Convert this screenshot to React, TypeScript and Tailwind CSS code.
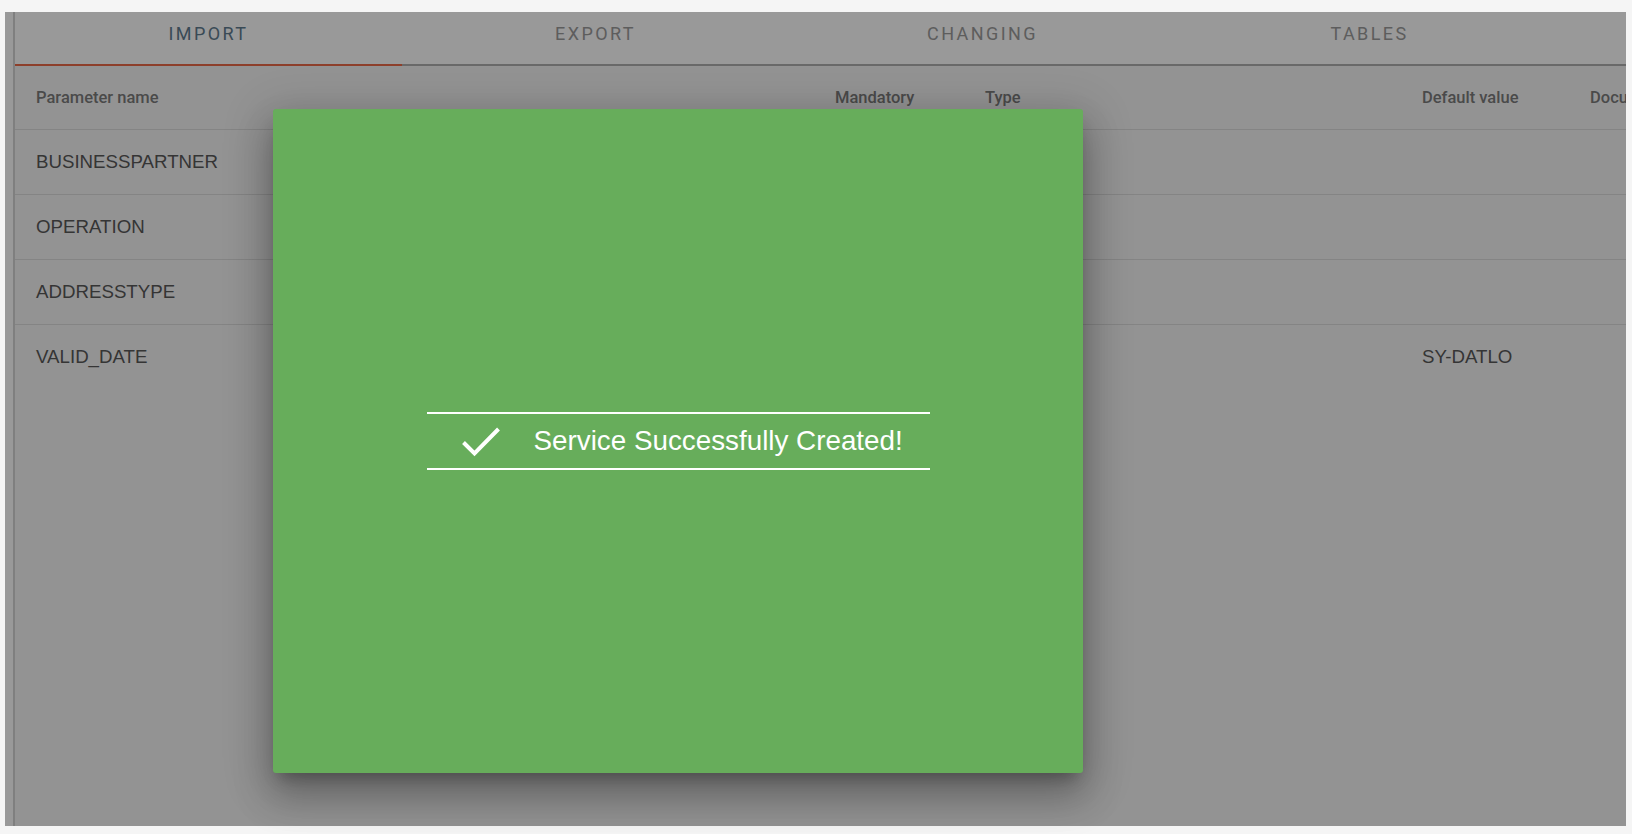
import React from "react";

const tabs = ["IMPORT", "EXPORT", "CHANGING", "TABLES"];
const rows: { name: string; def: string }[] = [
  { name: "BUSINESSPARTNER", def: "" },
  { name: "OPERATION", def: "" },
  { name: "ADDRESSTYPE", def: "" },
  { name: "VALID_DATE", def: "SY-DATLO" },
];

export default function App() {
  return (
    <div className="relative h-[834px] w-full overflow-hidden bg-[#f5f5f5] pt-[12px] pl-[5px] pr-[6px] pb-[8px]">
      <div className="relative flex h-full bg-white pl-[8px]">
        <div className="flex min-w-0 flex-1 flex-col overflow-hidden border-l-2 border-[#d4d4d4] bg-[#f6f6f6]">
          {/* Tabs */}
          <div className="flex border-b-2 border-[#b0b0b0] bg-white">
            {tabs.map((t, i) => (
              <div
                key={t}
                className={
                  "-mb-[2px] flex h-[54px] w-[387px] shrink-0 justify-center border-b-2 pt-[11px] text-[18px] leading-[22px] tracking-[2.4px] " +
                  (i === 0
                    ? "border-[#ec6a48] text-[#5f7c90]"
                    : "border-transparent text-[#9c9c9c]")
                }
                style={{ fontFamily: "Roboto, 'Liberation Sans', sans-serif" }}
              >
                {t}
              </div>
            ))}
          </div>

          {/* Table header */}
          <div
            className="grid h-[64px] shrink-0 grid-cols-[799px_150px_437px_168px_1fr] items-center border-b border-[#dcdcdc] pl-[21px] pt-[2px] text-[16.5px] font-medium text-[#7c7c7c]"
            style={{ fontFamily: "Roboto, 'Liberation Sans', sans-serif" }}
          >
            <div>Parameter name</div>
            <div>Mandatory</div>
            <div>Type</div>
            <div>Default value</div>
            <div className="whitespace-nowrap">Documentation</div>
          </div>

          {/* Rows */}
          {rows.map((r, i) => (
            <div
              key={r.name}
              className={
                "grid h-[65px] shrink-0 grid-cols-[799px_150px_437px_168px_1fr] items-center pl-[21px] text-[18.7px] text-[#595959] " +
                (i < rows.length - 1 ? "border-b border-[#dcdcdc]" : "")
              }
              style={{ fontFamily: "'Liberation Sans', Arial, sans-serif" }}
            >
              <div>{r.name}</div>
              <div></div>
              <div></div>
              <div>{r.def}</div>
              <div></div>
            </div>
          ))}
        </div>

        {/* Backdrop */}
        <div className="absolute inset-0 bg-black/40" />
      </div>

      {/* Dialog */}
      <div className="absolute left-[273px] top-[109px] flex h-[664px] w-[810px] items-center justify-center rounded-[3px] bg-[#67ad5b] shadow-[0_11px_15px_-7px_rgba(0,0,0,0.28),0_24px_38px_3px_rgba(0,0,0,0.2),0_9px_46px_8px_rgba(0,0,0,0.16)]">
        <div className="flex h-[58px] w-[503px] items-center gap-[33px] border-y-2 border-white pl-[34px]">
          <svg width="40" height="32" viewBox="0 0 40 32" fill="none" className="mt-[2px] shrink-0">
            <polyline
              points="2.5,16.5 13.5,27.5 37.5,3"
              stroke="white"
              strokeWidth="4"
              fill="none"
            />
          </svg>
          <span
            className="whitespace-nowrap text-[27.8px] leading-none text-white"
            style={{ fontFamily: "'Liberation Sans', Arial, sans-serif" }}
          >
            Service Successfully Created!
          </span>
        </div>
      </div>
    </div>
  );
}
